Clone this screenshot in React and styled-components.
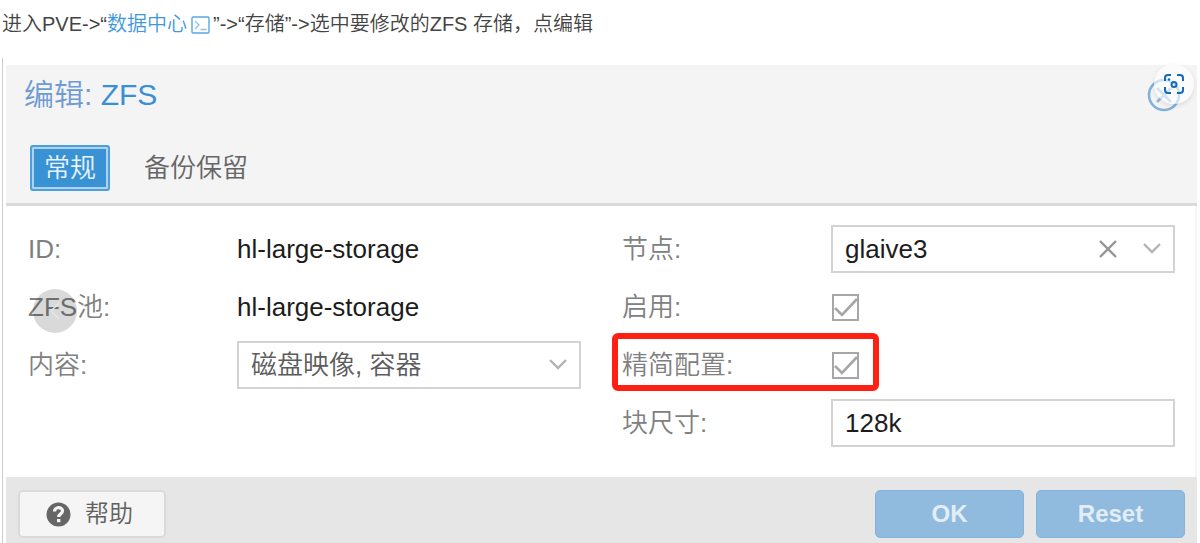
import { useState } from 'react';
import styled, { createGlobalStyle } from 'styled-components';

const GlobalStyle = createGlobalStyle`
  * {
    box-sizing: border-box;
  }

  body {
    margin: 0;
    background: #fff;
    overflow: hidden;
    font-family: 'Liberation Sans', 'Noto Sans CJK SC', sans-serif;
  }

  button,
  input,
  select {
    font-family: inherit;
    margin: 0;
  }
`;

const Intro = styled.p`
  margin: 0;
  padding: 0 2px;
  font-size: 20px;
  font-weight: 350;
  line-height: 48px;
  color: #444;
`;

const TermLink = styled.a`
  color: #3f98de;
  text-decoration: none;

  svg {
    margin: 0 3px 0 4px;
    vertical-align: -3px;
  }
`;

const Figure = styled.div`
  margin: 10px 3px 0 2px;
  padding: 7px 0 0 3px;
  border-left: 1px solid #ccc;
`;

const Dialog = styled.section`
  position: relative;
  font-size: 26px;
  font-weight: 350;
`;

const Header = styled.header`
  height: 141px;
  padding: 8px 16px 0 18px;
  background: #f4f4f4;
  border-bottom: 3px solid #dadada;
`;

const TitleBar = styled.div`
  display: flex;
  align-items: center;
  justify-content: space-between;
  height: 44px;
`;

const Title = styled.h1`
  margin: 0;
  font-size: 30px;
  font-weight: 350;
  line-height: 44px;
  color: #6f9bd3;

  span {
    color: #3a8fd4;
  }
`;

const IconButton = styled.button`
  display: flex;
  padding: 0;
  border: 0;
  background: none;
`;

const Tabs = styled.nav`
  display: flex;
  gap: 20px;
  margin-top: 28px;
  padding-left: 6px;
`;

const Tab = styled.button`
  height: 46px;
  padding: 0 12px;
  border: 2px solid ${({ $active }) => ($active ? '#4a9fdc' : 'transparent')};
  border-radius: 3px;
  background: ${({ $active }) => ($active ? '#3892d4' : 'transparent')};
  box-shadow: ${({ $active }) => ($active ? 'inset 0 0 0 2px #afd3ee' : 'none')};
  color: ${({ $active }) => ($active ? '#e8f2fa' : '#666')};
  font-size: 26px;
  font-weight: 350;
  line-height: 40px;
`;

const Form = styled.form`
  display: grid;
  grid-template-columns: repeat(2, minmax(0, 1fr));
  gap: 41px;
  padding: 19px 20px 30px 22px;
  border-right: 2px solid #f6f6f6;
`;

const Column = styled.div`
  display: flex;
  flex-direction: column;
  gap: 10px;
`;

const Row = styled.div`
  position: relative;
  display: flex;
  align-items: center;
  height: 48px;
  line-height: 48px;
`;

const Label = styled.label`
  flex: 0 0 209px;
  color: #808080;
`;

const Value = styled.output`
  color: #1c1c1c;
  font-weight: 400;
`;

const FieldBox = styled.div`
  display: flex;
  flex: 1;
  align-items: center;
  gap: 26px;
  min-width: 0;
  height: 48px;
  padding: 0 12px;
  border: 2px solid #d3d3d3;
  background: #fff;
`;

const fieldText = `
  flex: 1;
  min-width: 0;
  height: 44px;
  padding: 0;
  border: 0;
  outline: 0;
  appearance: none;
  background: none;
  font-size: 26px;
  line-height: 44px;
`;

const Select = styled.select`
  ${fieldText}
  color: ${({ $muted }) => ($muted ? '#5c5c5c' : '#1c1c1c')};
  font-weight: ${({ $muted }) => ($muted ? 350 : 400)};
`;

const TextInput = styled.input`
  ${fieldText}
  color: #1c1c1c;
`;

const Checkbox = styled.span`
  display: grid;
  width: 27px;
  height: 27px;
  margin-left: 1px;

  input,
  svg {
    grid-area: 1 / 1;
    width: 27px;
    height: 27px;
  }

  input {
    appearance: none;
    border: 2px solid #a6a6a6;
    background: #fff;
  }

  svg {
    pointer-events: none;
    visibility: hidden;
  }

  input:checked + svg {
    visibility: visible;
  }
`;

const Highlight = styled.span`
  position: absolute;
  top: -8px;
  left: -10px;
  width: 267px;
  height: 58px;
  border: 6px solid #ff2014;
  border-radius: 6px;
  pointer-events: none;
`;

const Footer = styled.footer`
  display: flex;
  gap: 12px;
  padding: 13px 12px 6px;
  background: #e6e6e6;
`;

const HelpButton = styled.button`
  display: flex;
  align-items: center;
  gap: 14px;
  width: 148px;
  height: 48px;
  margin-right: auto;
  padding: 0 26px;
  border: 2px solid #dadada;
  border-radius: 5px;
  background: #f5f5f5;
  color: #606060;
  font-size: 24px;
  font-weight: 350;
  line-height: 44px;
`;

const ActionButton = styled.button`
  width: 149px;
  height: 48px;
  padding: 0;
  border: 1px solid #82b5de;
  border-radius: 5px;
  background: #90bbde;
  color: #e3edf6;
  font-size: 24px;
  font-weight: 700;
`;

const RoundButton = styled.button`
  position: absolute;
  display: flex;
  align-items: center;
  justify-content: center;
  padding: 0;
  border: 0;
  border-radius: 50%;
`;

const PrevButton = styled(RoundButton)`
  top: 224px;
  left: 27px;
  width: 44px;
  height: 44px;
  background: rgba(0, 0, 0, 0.15);
`;

const ScanButton = styled(RoundButton)`
  top: -1px;
  right: 3px;
  width: 40px;
  height: 40px;
  background: rgba(255, 255, 255, 0.6);
  box-shadow: 0 2px 5px rgba(0, 0, 0, 0.1);
`;

const TerminalIcon = () => (
  <svg width="19" height="18" viewBox="0 0 19 18" fill="none" aria-hidden="true">
    <rect x="1" y="1" width="17" height="16" rx="1" stroke="#5aa7e3" strokeWidth="1.4" />
    <path d="M4 5l4 4-4 4M9.500 13.500h6" stroke="#8fc3ec" strokeWidth="1.3" />
  </svg>
);

const CloseIcon = () => (
  <svg width="34" height="34" viewBox="0 0 34 34" fill="none" aria-hidden="true">
    <circle cx="17" cy="17" r="15" stroke="#7fb3dc" strokeWidth="2.600" />
    <path d="M10 10l14 14M24 10L10 24" stroke="#93b9e0" strokeWidth="2.600" />
  </svg>
);

const ScanIcon = () => (
  <svg width="22" height="22" viewBox="0 0 22 22" fill="none" aria-hidden="true">
    <path
      d="M2 8V5a3 3 0 0 1 3-3h3M14 2h3a3 3 0 0 1 3 3v3M20 14v3a3 3 0 0 1-3 3h-3M8 20H5a3 3 0 0 1-3-3v-3"
      stroke="#0f6cbd"
      strokeWidth="2"
    />
    <circle cx="11" cy="11.500" r="2.500" stroke="#0f6cbd" strokeWidth="2" />
    <circle cx="6" cy="6.500" r="1.200" fill="#0f6cbd" />
  </svg>
);

const ChevronIcon = () => (
  <svg width="18" height="12" viewBox="0 0 18 12" fill="none" aria-hidden="true">
    <path d="M1 1l8 8 8-8" stroke="#b3b3b3" strokeWidth="2.400" />
  </svg>
);

const ClearIcon = () => (
  <svg width="18" height="18" viewBox="0 0 18 18" fill="none" aria-hidden="true">
    <path d="M1 1l16 16M17 1L1 17" stroke="#959595" strokeWidth="2.400" />
  </svg>
);

const TickIcon = () => (
  <svg viewBox="0 0 27 27" fill="none" aria-hidden="true">
    <path d="M3 14l7 7L25 5" stroke="#a6a6a6" strokeWidth="2.600" />
  </svg>
);

const HelpIcon = () => (
  <svg width="25" height="25" viewBox="0 0 25 25" fill="none" aria-hidden="true">
    <circle cx="12.500" cy="12.500" r="12" fill="#666" />
    <path d="M8.500 9.500c0-5 8-5 8-.5 0 3-3.800 2.800-3.800 6" stroke="#f5f5f5" strokeWidth="3.200" />
    <path d="M11 17h3.400v3.200H11z" fill="#f5f5f5" />
  </svg>
);

const CheckField = ({ id, label, highlighted }) => (
  <Row>
    <Label htmlFor={id}>{label}</Label>
    <Checkbox>
      <input id={id} type="checkbox" defaultChecked />
      <TickIcon />
    </Checkbox>
    {highlighted && <Highlight />}
  </Row>
);

const TABS = ['常规', '备份保留'];

const App = () => {
  const [activeTab, setActiveTab] = useState(TABS[0]);

  return (
    <>
      <GlobalStyle />
      <Intro>
        进入PVE-&gt;“
        <TermLink href="#datacenter">
          数据中心
          <TerminalIcon />
        </TermLink>
        ”-&gt;“存储”-&gt;选中要修改的ZFS 存储，点编辑
      </Intro>
      <Figure>
        <Dialog>
          <Header>
            <TitleBar>
              <Title>
                编辑: <span>ZFS</span>
              </Title>
              <IconButton type="button" aria-label="关闭">
                <CloseIcon />
              </IconButton>
            </TitleBar>
            <Tabs>
              {TABS.map((tab) => (
                <Tab
                  key={tab}
                  type="button"
                  $active={tab === activeTab}
                  onClick={() => setActiveTab(tab)}
                >
                  {tab}
                </Tab>
              ))}
            </Tabs>
          </Header>
          <Form>
            <Column>
              <Row>
                <Label htmlFor="storage-id">ID:</Label>
                <Value id="storage-id">hl-large-storage</Value>
              </Row>
              <Row>
                <Label htmlFor="pool">ZFS池:</Label>
                <Value id="pool">hl-large-storage</Value>
              </Row>
              <Row>
                <Label htmlFor="content">内容:</Label>
                <FieldBox>
                  <Select id="content" $muted>
                    <option>磁盘映像, 容器</option>
                  </Select>
                  <ChevronIcon />
                </FieldBox>
              </Row>
            </Column>
            <Column>
              <Row>
                <Label htmlFor="node">节点:</Label>
                <FieldBox>
                  <Select id="node">
                    <option>glaive3</option>
                  </Select>
                  <IconButton type="button" aria-label="清除">
                    <ClearIcon />
                  </IconButton>
                  <ChevronIcon />
                </FieldBox>
              </Row>
              <CheckField id="enable" label="启用:" />
              <CheckField id="thin" label="精简配置:" highlighted />
              <Row>
                <Label htmlFor="block-size">块尺寸:</Label>
                <FieldBox>
                  <TextInput id="block-size" defaultValue="128k" />
                </FieldBox>
              </Row>
            </Column>
          </Form>
          <Footer>
            <HelpButton type="button">
              <HelpIcon />
              帮助
            </HelpButton>
            <ActionButton type="button">OK</ActionButton>
            <ActionButton type="button">Reset</ActionButton>
          </Footer>
          <PrevButton type="button" aria-label="上一张">
            <svg width="10" height="18" viewBox="0 0 10 18" fill="none" aria-hidden="true">
              <path d="M9 1L1 9l8 8" stroke="#e6e6e6" strokeWidth="1.500" />
            </svg>
          </PrevButton>
          <ScanButton type="button" aria-label="图像搜索">
            <ScanIcon />
          </ScanButton>
        </Dialog>
      </Figure>
    </>
  );
};

export default App;
